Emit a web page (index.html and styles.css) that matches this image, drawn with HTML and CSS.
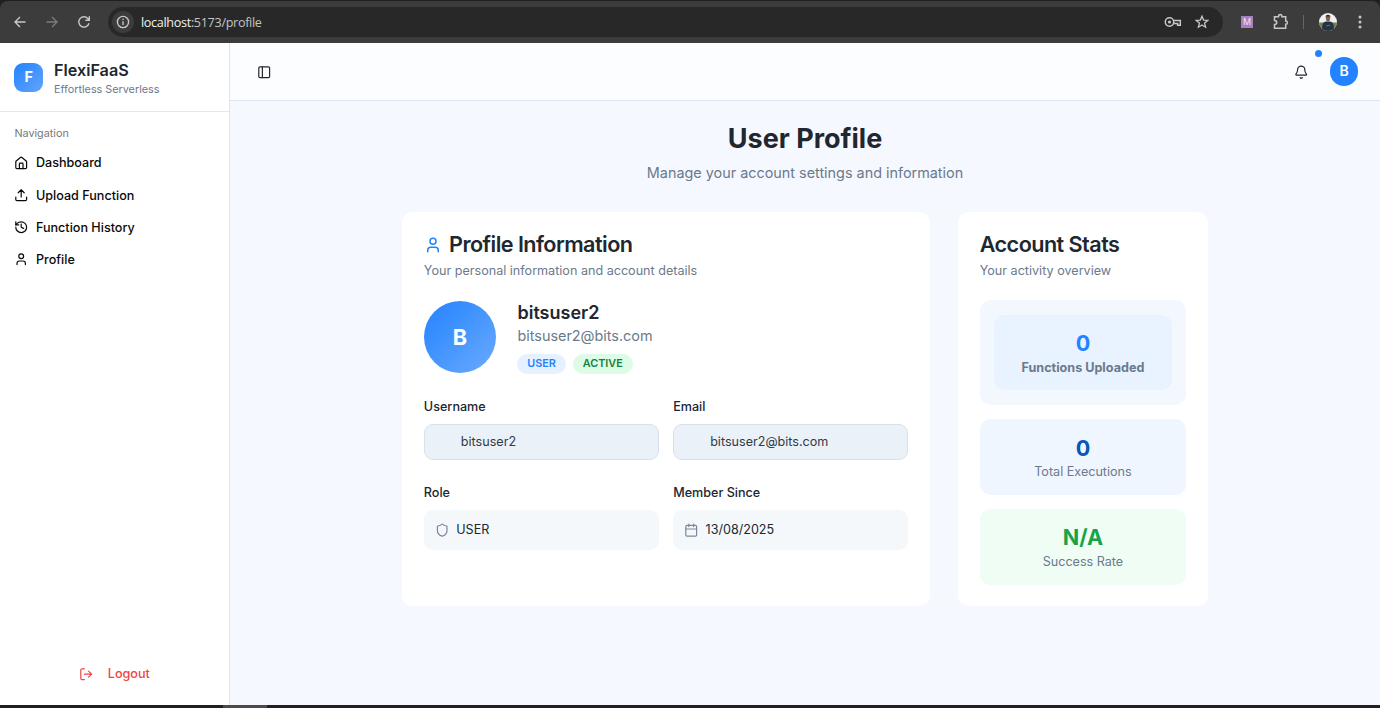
FILE: index.html
```html
<!DOCTYPE html>
<html lang="en">
<head>
<meta charset="utf-8">
<title>FlexiFaaS</title>
<link rel="stylesheet" href="styles.css">
</head>
<body>
<div class="browser">
  <div class="toolbar">
    <svg class="tool-icon" viewBox="0 0 14 14"><path d="M12.500 7H2M7 2 2 7l5 5"/></svg>
    <svg class="tool-icon dim" viewBox="0 0 14 14"><path d="M1.500 7H12M7 2l5 5-5 5"/></svg>
    <svg class="tool-icon" viewBox="0 0 14 14"><path d="M12 8.3A5.2 5.2 0 1 1 10.8 3.400L12.200 5M12.300 1.200v4H8.300"/></svg>
    <div class="address">
      <span class="info"><svg viewBox="0 0 14 14"><circle cx="7" cy="7" r="5.6"/><path d="M7 6.300v3.800M7 3.800v1.300"/></svg></span>
      <span class="url"><b>localhost</b>:5173/profile</span>
      <svg class="key" viewBox="0 0 18 12"><circle cx="5.500" cy="6" r="4.200"/><circle class="solid" cx="5.500" cy="6" r="1.600"/><path d="M9.600 4.500H16.300v4.700h-2.700V7.500H9.600"/></svg>
      <svg class="star" viewBox="0 0 14 14"><path d="m7 1.200 1.600 3.900 4.200.3-3.200 2.700 1 4.100L7 10l-3.600 2.200 1-4.100L1.200 5.400l4.200-.3z"/></svg>
    </div>
    <span class="ext">M</span>
    <svg class="puzzle" viewBox="0 0 17 17"><path d="M2.500 3.800h4c0-3 3.500-3 3.500 0h3.700v4.300c2.300 0 2.300 3.200 0 3.200v3.900H2.500v-3.700c3-.2 3-3.900 0-4.100z"/></svg>
    <span class="divider"></span>
    <svg class="photo" viewBox="0 0 18 18"><defs><clipPath id="round"><circle cx="9" cy="9" r="9"/></clipPath></defs><g clip-path="url(#round)"><path fill="#eef0f1" d="M0 0h18v18H0z"/><path fill="#718154" d="M0 9.500h18V18H0z"/><path fill="#243447" d="M3.500 18c-1-6 .5-9.500 3.500-9.500h4c3 0 4.500 3.500 3.500 9.500z"/><ellipse cx="9" cy="5.600" rx="2.100" ry="2.800" fill="#8a5d4a"/><path fill="#252326" d="M6.600 5C6 .5 12 .5 11.400 5L10.600 3.600H7.400z"/><path fill="#8a6555" d="m7 12.500 4-.8.6.7-4 1.200z"/></g></svg>
    <svg class="more" viewBox="0 0 4 14"><circle cx="2" cy="2" r="1.500"/><circle cx="2" cy="7" r="1.500"/><circle cx="2" cy="12" r="1.500"/></svg>
  </div>

  <div class="app">
    <aside class="sidebar">
      <div class="brand">
        <span class="logo">F</span>
        <div><div class="brand-name">FlexiFaaS</div><div class="brand-sub">Effortless Serverless</div></div>
      </div>
      <nav class="nav">
        <div class="nav-label">Navigation</div>
        <a class="nav-item"><svg class="icon" viewBox="0 0 24 24"><path d="M15 21v-8a1 1 0 0 0-1-1h-4a1 1 0 0 0-1 1v8"/><path d="M3 10a2 2 0 0 1 .709-1.528l7-5.999a2 2 0 0 1 2.582 0l7 5.999A2 2 0 0 1 21 10v9a2 2 0 0 1-2 2H5a2 2 0 0 1-2-2z"/></svg><span>Dashboard</span></a>
        <a class="nav-item"><svg class="icon" viewBox="0 0 24 24"><path d="M21 15v4a2 2 0 0 1-2 2H5a2 2 0 0 1-2-2v-4M17 8l-5-5-5 5M12 3v12"/></svg><span>Upload Function</span></a>
        <a class="nav-item"><svg class="icon" viewBox="0 0 24 24"><path d="M3 12a9 9 0 1 0 9-9 9.750 9.750 0 0 0-6.740 2.740L3 8"/><path d="M3 3v5h5M12 7v5l4 2"/></svg><span>Function History</span></a>
        <a class="nav-item"><svg class="icon" viewBox="0 0 24 24"><path d="M19 21v-2a4 4 0 0 0-4-4H9a4 4 0 0 0-4 4v2"/><circle cx="12" cy="7" r="4"/></svg><span>Profile</span></a>
      </nav>
      <a class="logout"><svg class="icon" viewBox="0 0 24 24"><path d="M9 21H5a2 2 0 0 1-2-2V5a2 2 0 0 1 2-2h4M16 17l5-5-5-5M21 12H9"/></svg><span>Logout</span></a>
    </aside>

    <main class="main">
      <header class="topbar">
        <svg class="icon" viewBox="0 0 24 24"><rect x="3" y="3" width="18" height="18" rx="2"/><path d="M9 3v18"/></svg>
        <div class="top-actions">
          <span class="bell"><svg class="icon" viewBox="0 0 24 24"><path d="M10.268 21a2 2 0 0 0 3.464 0"/><path d="M3.262 15.326A1 1 0 0 0 4 17h16a1 1 0 0 0 .740-1.673C19.410 13.956 18 12.499 18 8A6 6 0 0 0 6 8c0 4.499-1.411 5.956-2.738 7.326"/></svg><i class="dot"></i></span>
          <span class="avatar-sm">B</span>
        </div>
      </header>

      <div class="content">
        <h1>User Profile</h1>
        <p class="lead">Manage your account settings and information</p>
        <div class="grid">
          <section class="card">
            <h2><svg class="icon icon-user" viewBox="0 0 24 24"><path d="M19 21v-2a4 4 0 0 0-4-4H9a4 4 0 0 0-4 4v2"/><circle cx="12" cy="7" r="4"/></svg><span>Profile Information</span></h2>
            <p class="desc">Your personal information and account details</p>
            <div class="person">
              <span class="avatar-lg">B</span>
              <div>
                <h3>bitsuser2</h3>
                <p class="mail">bitsuser2@bits.com</p>
                <div class="badges"><span class="badge">USER</span><span class="badge active">ACTIVE</span></div>
              </div>
            </div>
            <div class="fields">
              <div><div class="label">Username</div><div class="input">bitsuser2</div></div>
              <div><div class="label">Email</div><div class="input">bitsuser2@bits.com</div></div>
              <div><div class="label">Role</div><div class="box"><svg class="icon" viewBox="0 0 24 24"><path d="M20 13c0 5-3.500 7.500-7.660 8.950a1 1 0 0 1-.670-.010C7.500 20.500 4 18 4 13V6a1 1 0 0 1 1-1c2 0 4.500-1.200 6.240-2.720a1.170 1.170 0 0 1 1.520 0C14.510 3.810 17 5 19 5a1 1 0 0 1 1 1z"/></svg><span>USER</span></div></div>
              <div><div class="label">Member Since</div><div class="box"><svg class="icon" viewBox="0 0 24 24"><path d="M8 2v4M16 2v4M3 10h18"/><rect x="3" y="4" width="18" height="18" rx="2"/></svg><span>13/08/2025</span></div></div>
            </div>
          </section>

          <section class="card">
            <h2>Account Stats</h2>
            <p class="desc">Your activity overview</p>
            <div class="stats">
              <div class="stat-wrap"><div class="stat uploaded"><strong>0</strong><span>Functions Uploaded</span></div></div>
              <div class="stat runs"><strong>0</strong><span>Total Executions</span></div>
              <div class="stat rate"><strong>N/A</strong><span>Success Rate</span></div>
            </div>
          </section>
        </div>
      </div>
    </main>
  </div>
  <div class="taskbar"><span></span></div>
</div>
</body>
</html>
```
FILE: styles.css
```css
* { box-sizing: border-box; }
body, h1, h2, h3, p { margin: 0; }
body { font-family: Inter, "Liberation Sans", sans-serif; color: #21272f; font-size: 12.6px; line-height: 18px; }
svg { fill: none; stroke: currentColor; flex: none; display: block; }
.icon { width: 14.4px; height: 14.4px; stroke-width: 2; stroke-linecap: round; stroke-linejoin: round; }
.browser { width: 1380px; height: 708px; display: flex; flex-direction: column; overflow: hidden; background: #1f2020; }

.toolbar { height: 42px; margin-top: 1px; flex: none; display: flex; align-items: center; background: #3c3c3c; border-radius: 8px 8px 0 0; padding: 0 18px 0 13px; color: #c7c7c7; }
.tool-icon { width: 14px; height: 14px; stroke-width: 1.4; margin-right: 18px; margin-top: -1px; }
.tool-icon.dim { color: #7b7b7b; }
.address { width: 1115px; height: 30px; margin-left: -1px; border-radius: 15px; background: #282828; display: flex; align-items: center; padding: 0 14px 0 4px; }
.info { width: 22px; height: 22px; border-radius: 50%; background: #3c3c3c; display: flex; align-items: center; justify-content: center; margin-right: 7px; }
.info svg { width: 14px; height: 14px; stroke-width: 1.4; }
.url { flex: 1; padding-top: 1px; font: 12.6px/18px "Open Sans", "Noto Sans", sans-serif; letter-spacing: -0.32px; color: #c4c4c4; }
.url b { font-weight: 400; color: #f1f1f1; }
.key { width: 18px; height: 12px; stroke-width: 1.5; margin-right: 13px; }
.key .solid { fill: currentColor; stroke: none; }
.star { width: 14px; height: 14px; stroke-width: 1.3; }
.ext { width: 12px; height: 12px; margin-left: 18px; background: #a880c0; color: #eee3f3; font-size: 9px; line-height: 12px; text-align: center; }
.puzzle { width: 17px; height: 17px; stroke-width: 1.5; margin-left: 19px; margin-top: -2px; }
.divider { width: 1px; height: 14px; margin: 0 15px 0 14px; background: #666; }
.photo { width: 18px; height: 18px; stroke: none; margin-top: -1px; }
.more { width: 4px; height: 14px; margin-left: 21px; fill: currentColor; stroke: none; }

.app { flex: 1; min-height: 0; display: flex; background: #f5f8ff; }
.sidebar { width: 230px; flex: none; background: #fff; border-right: 1px solid #dde3f0; display: flex; flex-direction: column; }
.brand { display: flex; align-items: center; gap: 10.8px; height: 69px; padding: 1px 14.4px 0; border-bottom: 1px solid #e5e7eb; }
.brand > div { padding-top: 1px; }
.logo { width: 28.8px; height: 28.8px; border-radius: 9px; background: linear-gradient(135deg, #2382ff, #62a5fb); color: #fff; font-size: 14.4px; font-weight: 700; line-height: 28.8px; text-align: center; }
.brand-name { font-size: 16.2px; font-weight: 600; line-height: 25.2px; }
.brand-sub { font-size: 10.8px; line-height: 14.4px; color: #6b7a8c; }
.nav { flex: 1; padding: 8px 7.2px 0; }
.nav-label { height: 28.8px; padding: 0 7.2px; font-size: 10.8px; line-height: 28.8px; color: #75777b; }
.nav-item { height: 28.8px; margin-bottom: 3.5px; padding: 0 7.2px; display: flex; align-items: center; gap: 7.2px; font-weight: 500; color: #0a0a0a; }
.nav-item .icon { margin-top: -1px; }
.nav-item span { padding-top: 0.5px; }
.logout { height: 61.5px; padding-left: 79px; display: flex; align-items: center; gap: 14.4px; color: #ef4444; font-weight: 500; }
.logout .icon { margin-top: -1px; }

.main { flex: 1; }
.topbar { height: 57.6px; padding: 1px 21.6px 0 27.4px; display: flex; align-items: center; justify-content: space-between; background: #fcfdff; border-bottom: 1px solid #dde3f2; }
.top-actions { display: flex; align-items: center; gap: 21.6px; }
.bell { position: relative; }
.dot { position: absolute; left: 21px; top: -14.5px; width: 7.2px; height: 7.2px; border-radius: 50%; background: #2382ff; }
.avatar-sm { width: 28.8px; height: 28.8px; border-radius: 50%; background: #2382ff; color: #fff; font-size: 14px; font-weight: 600; line-height: 28.8px; text-align: center; }
.content { width: 805.5px; margin: 0 auto; padding-top: 22.6px; }
h1 { font-size: 27px; line-height: 32.4px; font-weight: 700; text-align: center; }
.lead { margin: 6.2px 0 28.8px; font-size: 14.4px; line-height: 21.6px; text-align: center; color: #6b7a8c; }
.grid { display: grid; grid-template-columns: 527.4px 249.6px; gap: 28.5px; }
.card { background: #fff; border-radius: 10.8px; padding: 21.6px; }
h2 { display: flex; align-items: center; gap: 7.2px; font-size: 21.6px; line-height: 21.6px; font-weight: 600; letter-spacing: -0.54px; }
.icon-user { width: 18px; height: 18px; color: #2382ff; }
.desc { margin: 6.2px 0 20.8px; color: #6b7a8c; }
.person { display: flex; align-items: center; gap: 21.6px; }
.avatar-lg { width: 72px; height: 72px; border-radius: 50%; background: linear-gradient(135deg, #2382ff, #6aaafd); color: #fff; font-size: 21.6px; font-weight: 700; line-height: 72px; text-align: center; }
h3 { font-size: 18px; line-height: 25.2px; font-weight: 600; }
.mail { margin-top: -0.6px; font-size: 14.4px; line-height: 21.6px; color: #6b7a8c; }
.badges { display: flex; gap: 7.2px; margin-top: 7.8px; }
.badge { height: 19.8px; padding: 0 9.9px; border-radius: 10px; background: #e6f1ff; color: #2382ff; font-size: 10.8px; line-height: 19.8px; font-weight: 600; }
.badge.active { background: #dcfce7; color: #15803d; }
.fields { margin-top: 21.6px; display: grid; grid-template-columns: 1fr 1fr; gap: 21.9px 14.4px; }
.label { margin-bottom: 6.6px; line-height: 21.6px; font-weight: 500; }
.input { height: 36px; padding-left: 36px; border: 1px solid #d7e1eb; border-radius: 9px; background: #eaf1f9; line-height: 34px; color: #343a43; }
.box { height: 39.6px; padding: 0 10.8px; border-radius: 9px; background: #f4f8fb; display: flex; align-items: center; gap: 7.2px; }
.box .icon { color: #7a879b; }
.stats { display: grid; gap: 14.4px; }
.stat-wrap { padding: 14.4px; border-radius: 10.8px; background: #f3f8ff; }
.stat { height: 75.6px; padding: 14.4px 0; border-radius: 10.8px; text-align: center; color: #6b7a8c; }
.stat strong { display: block; font-size: 21.6px; line-height: 28.8px; font-weight: 700; }
.stat span { display: block; padding-top: 0.8px; }
.uploaded { background: #e9f2ff; font-weight: 700; }
.uploaded strong { color: #2382ff; }
.runs { background: #eff6ff; }
.runs strong { color: #0556b8; }
.rate { background: #f0fdf4; }
.rate strong { color: #16a34a; }
.taskbar { height: 3px; flex: none; background: #202020; padding-left: 223px; }
.taskbar span { display: block; width: 44px; height: 3px; background: #4b4b4b; }
```
